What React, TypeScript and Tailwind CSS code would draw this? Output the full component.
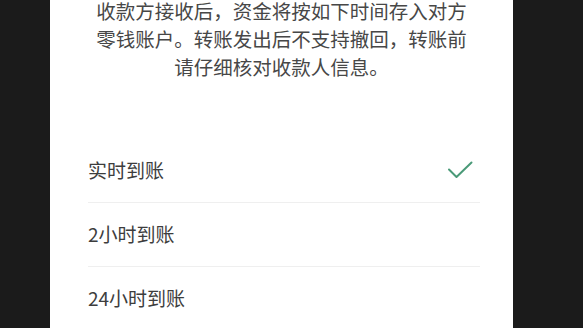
import React from "react";

const font = { fontFamily: '"Noto Sans CJK SC", "Noto Sans", sans-serif' };

function Check() {
  return (
    <svg width="26" height="20" viewBox="0 0 26 20" fill="none">
      <path d="M2 9.5 L9.5 17 L24.5 2.5" stroke="#4a9a78" strokeWidth="2" strokeLinecap="round" strokeLinejoin="round" />
    </svg>
  );
}

export default function App() {
  const options = [
    { label: "实时到账", checked: true },
    { label: "2小时到账", checked: false },
    { label: "24小时到账", checked: false },
  ];
  return (
    <div className="flex h-[328px] w-[583px] overflow-hidden bg-[#1b1b1b]" style={font}>
      <div className="w-[50px] shrink-0 bg-[#1b1b1b]" />
      <div className="w-[463px] shrink-0 bg-white flex flex-col">
        <div className="mt-[-3px] text-center text-[19.5px] leading-[28px] text-[#474747]">
          收款方接收后，资金将按如下时间存入对方
          <br />
          零钱账户。转账发出后不支持撤回，转账前
          <br />
          请仔细核对收款人信息。
        </div>
        <div className="mt-[58px] ml-[38px] mr-[33px] flex flex-col">
          {options.map((o) => (
            <div
              key={o.label}
              className="flex h-[64px] items-center justify-between border-b border-[#efefef] text-[19px] text-[#3d3d3d]"
            >
              <span>{o.label}</span>
              {o.checked && (
                <span className="mr-[7px] mt-[-2px]">
                  <Check />
                </span>
              )}
            </div>
          ))}
        </div>
      </div>
      <div className="flex-1 bg-[#1b1b1b]" />
    </div>
  );
}
